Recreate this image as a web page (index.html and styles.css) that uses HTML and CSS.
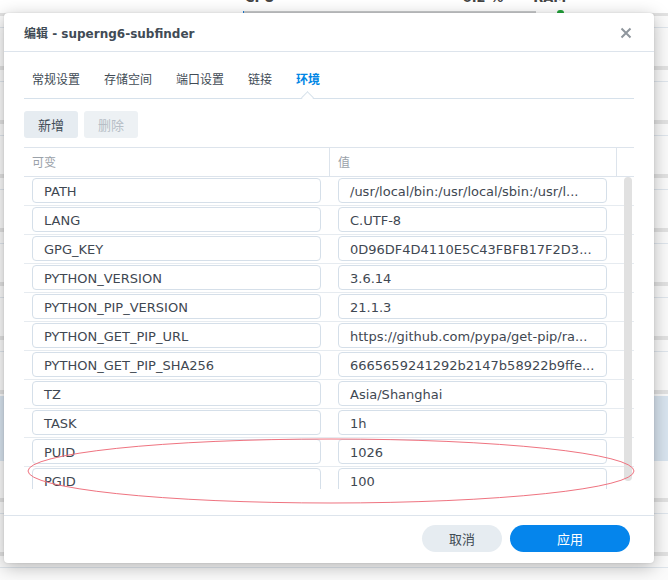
FILE: index.html
```html
<!DOCTYPE html>
<html lang="zh-CN">
<head>
<meta charset="utf-8">
<title>编辑 - superng6-subfinder</title>
<link rel="stylesheet" href="styles.css">
</head>
<body>
<div class="backdrop">
  <div class="stats">
    <span class="stat cpu">CPU</span>
    <span class="stat pct">0.2 %</span>
    <span class="stat ram">RAM</span>
  </div>
  <div class="meters">
    <div class="meter"></div>
    <div class="dot"></div>
  </div>
</div>

<div class="dialog">
  <div class="dlg-header">
    <span class="dlg-title">编辑 - superng6-subfinder</span>
    <svg class="close" width="12" height="12" viewBox="0 0 12 12"><path d="M1.5 1.5 L10.5 10.5 M10.5 1.5 L1.5 10.5" stroke="#8f969d" stroke-width="2" fill="none"/></svg>
  </div>
  <div class="dlg-body">
    <div class="tabs">
      <span class="tab">常规设置</span>
      <span class="tab">存储空间</span>
      <span class="tab">端口设置</span>
      <span class="tab">链接</span>
      <span class="tab active">环境<i class="notch"></i></span>
    </div>
    <div class="toolbar">
      <button class="btn">新增</button>
      <button class="btn disabled">删除</button>
    </div>
    <div class="grid">
      <div class="grid-head">
        <div class="hcell c1">可变</div>
        <div class="hcell c2">值</div>
        <div class="hcell c3"></div>
      </div>
      <div class="grid-body">
        <div class="rows">
          <div class="row"><div class="cell c1"><div class="field">PATH</div></div><div class="cell c2"><div class="field">/usr/local/bin:/usr/local/sbin:/usr/l...</div></div></div>
          <div class="row"><div class="cell c1"><div class="field">LANG</div></div><div class="cell c2"><div class="field">C.UTF-8</div></div></div>
          <div class="row"><div class="cell c1"><div class="field">GPG_KEY</div></div><div class="cell c2"><div class="field">0D96DF4D4110E5C43FBFB17F2D3...</div></div></div>
          <div class="row"><div class="cell c1"><div class="field">PYTHON_VERSION</div></div><div class="cell c2"><div class="field">3.6.14</div></div></div>
          <div class="row"><div class="cell c1"><div class="field">PYTHON_PIP_VERSION</div></div><div class="cell c2"><div class="field">21.1.3</div></div></div>
          <div class="row"><div class="cell c1"><div class="field">PYTHON_GET_PIP_URL</div></div><div class="cell c2"><div class="field">https://github.com/pypa/get-pip/ra...</div></div></div>
          <div class="row"><div class="cell c1"><div class="field">PYTHON_GET_PIP_SHA256</div></div><div class="cell c2"><div class="field">6665659241292b2147b58922b9ffe...</div></div></div>
          <div class="row"><div class="cell c1"><div class="field">TZ</div></div><div class="cell c2"><div class="field">Asia/Shanghai</div></div></div>
          <div class="row"><div class="cell c1"><div class="field">TASK</div></div><div class="cell c2"><div class="field">1h</div></div></div>
          <div class="row"><div class="cell c1"><div class="field">PUID</div></div><div class="cell c2"><div class="field">1026</div></div></div>
          <div class="row"><div class="cell c1"><div class="field">PGID</div></div><div class="cell c2"><div class="field">100</div></div></div>
        </div>
        <div class="scroll"><div class="thumb"></div></div>
      </div>
    </div>
  </div>
  <div class="dlg-footer">
    <button class="pill cancel">取消</button>
    <button class="pill apply">应用</button>
  </div>
</div>

<svg class="annot" width="668" height="580" viewBox="0 0 668 580"><ellipse cx="331" cy="471" rx="303" ry="32" fill="none" stroke="#ef7380" stroke-width="1"/></svg>
</body>
</html>
```
FILE: styles.css
```css
* { box-sizing: border-box; }
html, body { margin: 0; padding: 0; }
body {
  width: 668px;
  height: 580px;
  overflow: hidden;
  position: relative;
  font-family: "DejaVu Sans", "Noto Sans CJK SC", sans-serif;
  color: #414b55;
  background-color: #fbfbfb;
  background-image:
    linear-gradient(#d9e5f0, #d9e5f0),
    repeating-linear-gradient(to bottom,
      transparent 0, transparent 12px,
      #e2e2e2 12px, #e2e2e2 16px,
      transparent 16px, transparent 27px,
      #dfe6ed 27px, #dfe6ed 28px,
      transparent 28px, transparent 54px);
  background-size: 100% 65px, 100% 100%;
  background-position: 0 396px, 0 0;
  background-repeat: no-repeat, repeat;
}

.backdrop { height: 13px; overflow: hidden; background: #fff; position: relative; }
.stats { display: flex; height: 10px; overflow: hidden; font-weight: bold; font-size: 13px; line-height: 13px; color: #444; }
.stat { display: block; margin-top: -9px; }
.cpu { margin-left: 245px; }
.pct { margin-left: 188px; }
.ram { margin-left: 30px; }
.meters { display: flex; align-items: center; height: 3px; }
.meter { margin-left: 243px; width: 293px; height: 2px; background: #c9cbcd; border-left: 1px solid #1d7fd8; }
.dot { margin-left: 21px; width: 7px; height: 3px; border-radius: 3px 3px 0 0; background: #22a33a; }

.dialog {
  position: absolute;
  left: 4px;
  top: 13px;
  width: 650px;
  height: 550px;
  background: #fff;
  border-radius: 4px;
  box-shadow: 0 4px 18px rgba(0,0,0,0.28), 0 0 2px rgba(0,0,0,0.12);
  display: flex;
  flex-direction: column;
}

.dlg-header {
  height: 39px;
  border-bottom: 1px solid #dde4ec;
  display: flex;
  align-items: center;
  justify-content: space-between;
  padding: 0 22px 0 20px;
}
.dlg-title { font-size: 12px; font-weight: bold; color: #414b55; }
.close { display: block; margin-top: 1px; }

.dlg-body { flex: 1; padding: 0 20px; display: flex; flex-direction: column; }

.tabs {
  height: 47px;
  border-bottom: 1px solid #d6e1eb;
  display: flex;
  align-items: flex-end;
  gap: 24px;
  padding-left: 8px;
}
.tab { font-size: 12px; line-height: 18px; padding-bottom: 9px; color: #414b55; position: relative; }
.tab.active { color: #0086e5; font-weight: bold; }
.notch {
  position: absolute;
  left: 7px;
  bottom: -4px;
  width: 9px;
  height: 9px;
  background: #fff;
  border-top: 1px solid #d6e1eb;
  border-left: 1px solid #d6e1eb;
  transform: rotate(45deg);
}

.toolbar { display: flex; gap: 6px; margin-top: 12px; }
.btn {
  width: 54px;
  height: 27px;
  border: none;
  border-radius: 3px;
  background: #e6ecf1;
  color: #414b55;
  font-family: "DejaVu Sans", "Noto Sans CJK SC", sans-serif;
  font-size: 13px;
  padding: 0;
}
.btn.disabled { background: #edf1f4; color: #b6bec6; }

.grid { margin-top: 9px; border-top: 1px solid #dde4ec; }
.grid-head { display: flex; height: 29px; border-bottom: 1px solid #dde4ec; }
.hcell { font-size: 12px; line-height: 28px; padding-top: 1px; color: #9aa1a9; padding-left: 8px; }
.hcell.c1 { width: 306px; border-right: 1px solid #dde4ec; }
.hcell.c2 { width: 287px; border-right: 1px solid #dde4ec; }
.hcell.c3 { width: 17px; }

.grid-body { display: flex; height: 312px; overflow: hidden; }
.rows { width: 610px; flex: none; }
.row { display: flex; height: 29px; padding-top: 1px; border-bottom: 1px solid #e6ebf0; }
.cell { padding-left: 8px; }
.cell.c1 { width: 306px; padding-right: 9px; }
.cell.c2 { width: 287px; padding-right: 10px; }
.field {
  height: 25px;
  border: 1px solid #d5dfe9;
  border-radius: 4px;
  font-size: 13px;
  line-height: 23px;
  padding-top: 1px;
  padding-left: 11px;
  color: #3f4852;
  white-space: nowrap;
  overflow: hidden;
}
.scroll { width: 17px; margin-left: -17px; flex: none; padding-left: 7px; }
.thumb { width: 8px; height: 304px; border-radius: 4px; background: #e1e1e1; }

.dlg-footer {
  height: 48px;
  border-top: 1px solid #dde4ec;
  display: flex;
  justify-content: flex-end;
  align-items: flex-start;
  gap: 8px;
  padding: 9px 24px 0 0;
}
.pill {
  height: 27px;
  border: none;
  border-radius: 14px;
  font-family: "DejaVu Sans", "Noto Sans CJK SC", sans-serif;
  font-size: 13px;
  padding: 0;
}
.cancel { width: 80px; background: #e6ecf1; color: #414b55; }
.apply { width: 120px; background: #0585ec; color: #fff; }

.annot { position: absolute; left: 0; top: 0; pointer-events: none; }
```
